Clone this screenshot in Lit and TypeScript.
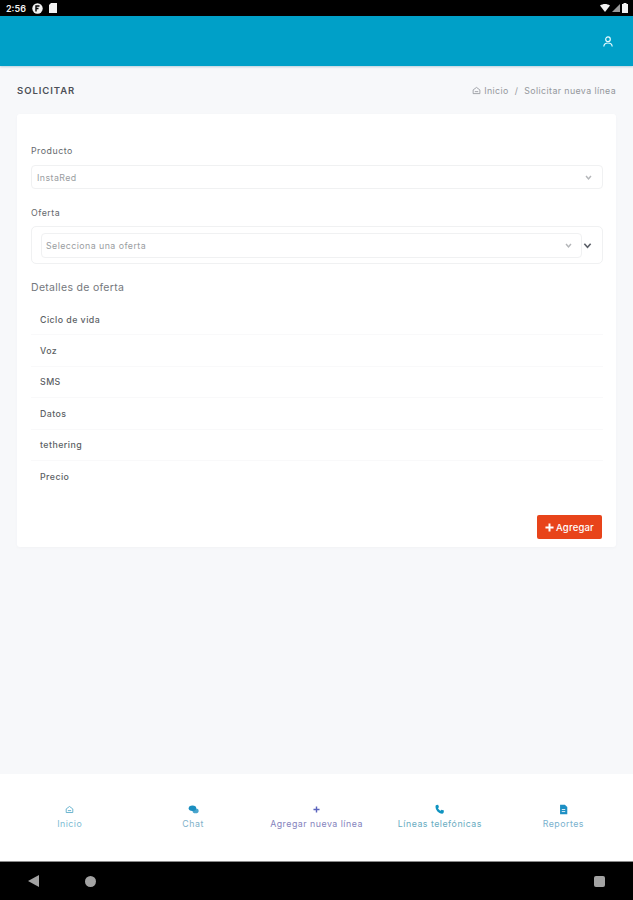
import { LitElement, html, css, svg } from 'lit';
import { customElement } from 'lit/decorators.js';

const homeIcon = svg`<path d="M2 7 8 2.500 14 7v6.500H2z" fill="none" stroke="currentColor" stroke-width="1.500"/><path d="M5 10h6" stroke="currentColor" stroke-width="1.500"/>`;
const chatIcon = svg`<ellipse cx="6.500" cy="6" rx="5.500" ry="4" fill="currentColor"/><ellipse cx="11" cy="10" rx="4.500" ry="3.400" fill="currentColor" opacity=".8"/>`;
const plusIcon = svg`<path d="M8 2.500v11M2.500 8h11" stroke="currentColor" stroke-width="2.600"/>`;
const phoneIcon = svg`<path d="M3.500 1.500 6 1l1.300 3.600-1.600 1.300c.7 1.800 2 3.100 3.800 3.900l1.400-1.600 3.600 1.400-.5 2.900c-.2.900-1 1.500-2 1.500C6.500 13.600 2.300 9 2.200 3.500c0-1 .4-1.700 1.300-2z" fill="currentColor"/>`;
const fileIcon = svg`<path d="M3 1h7l3.500 3.500V15H3z" fill="currentColor"/><path d="M5.500 8h5M5.500 11h5" stroke="#fff" stroke-width="1.200"/>`;

const navItems = [
  { label: 'Inicio', icon: homeIcon, box: '-2 -2 20 20', color: '#4fa6c6', text: '#7dbcd3' },
  { label: 'Chat', icon: chatIcon, box: '0 0 16 16', color: '#1b8fc0', text: '#7fb1c9' },
  { label: 'Agregar nueva línea', icon: plusIcon, box: '-2 -2 20 20', color: '#5a63bd', text: '#8583bd' },
  { label: 'Líneas telefónicas', icon: phoneIcon, box: '0 0 16 16', color: '#0f93c0', text: '#69acc1' },
  { label: 'Reportes', icon: fileIcon, box: '0 0 16 16', color: '#1d8fc4', text: '#7ab1ce' },
];

const offerRows = ['Ciclo de vida', 'Voz', 'SMS', 'Datos', 'tethering', 'Precio'];

@customElement('app-root')
export class AppRoot extends LitElement {
  static styles = css`
    :host {
      display: flex;
      flex-direction: column;
      height: 900px;
      background: #f7f8fa;
      font-family: Inter, "Liberation Sans", sans-serif;
      color: #4b4f56;
    }

    .status {
      height: 16px;
      background: #000;
      color: #f2f2f2;
      display: flex;
      align-items: center;
      padding: 0 5px 0 6px;
      font-size: 9px;
      font-weight: 600;
      gap: 6px;
    }
    .status .spacer { flex: 1; }
    .status svg { display: block; }
    .status-right { display: flex; align-items: center; gap: 2px; }

    .topbar {
      height: 50px;
      background: #00a0c8;
      box-shadow: 0 1px 2px rgba(0, 90, 130, 0.25);
      display: flex;
      align-items: center;
      justify-content: flex-end;
      padding: 0 20px;
      color: #e8fbff;
    }

    main {
      flex: 1;
      padding: 0 17px;
    }

    .crumbs-row {
      height: 48px;
      display: flex;
      align-items: center;
      justify-content: space-between;
    }
    .page-title {
      font-size: 9.5px;
      font-weight: 600;
      letter-spacing: 0.95px;
      color: #4d5057;
    }
    .crumbs {
      display: flex;
      align-items: center;
      gap: 3px;
      font-size: 8.8px;
      letter-spacing: 0.4px;
      color: #94979c;
    }
    .crumbs .sep { margin: 0 3px; }

    .card {
      background: #fff;
      border-radius: 3px;
      padding: 30px 13px 8px 14px;
      height: 433px;
      box-sizing: border-box;
      box-shadow: 0 1px 3px rgba(60, 70, 90, 0.03);
    }

    .label {
      font-size: 8.8px;
      line-height: 14px;
      letter-spacing: 0.5px;
      color: #65686d;
      margin-bottom: 7px;
    }
    .label.offer { margin-bottom: 6px; }

    .select {
      height: 24px;
      box-sizing: border-box;
      border: 1px solid #f0f1f2;
      border-radius: 4px;
      display: flex;
      align-items: center;
      justify-content: space-between;
      padding: 0 10px 0 5px;
      font-size: 8.8px;
      letter-spacing: 0.45px;
      color: #9a9da1;
      flex: 1;
    }
    .field { margin-bottom: 17px; }

    .select-group {
      height: 38px;
      box-sizing: border-box;
      border: 1px solid #f0f1f2;
      border-radius: 5px;
      display: flex;
      align-items: center;
      padding: 0 10px 0 9px;
      gap: 1px;
    }
    .select-group .select {
      height: 25px;
      padding: 0 9px 0 4px;
    }

    .details-title {
      font-size: 10.5px;
      line-height: 16px;
      letter-spacing: 0.3px;
      color: #74777c;
      margin: 16px 0 8px;
    }

    .row {
      height: 31.4px;
      box-sizing: border-box;
      display: flex;
      align-items: center;
      padding-left: 9px;
      font-size: 8.8px;
      font-weight: 500;
      letter-spacing: 0.45px;
      color: #5c5f65;
      border-bottom: 1px solid #f9f9fa;
    }
    .row.last { border-bottom: none; }

    .actions {
      display: flex;
      justify-content: flex-end;
      margin: 23px 1px 0 0;
    }
    .add {
      width: 65px;
      height: 24px;
      border: none;
      border-radius: 2px;
      background: #e8441a;
      color: #fff;
      font: inherit;
      font-size: 9.5px;
      font-weight: 500;
      letter-spacing: 0.2px;
      display: flex;
      align-items: center;
      justify-content: center;
      gap: 2px;
      padding: 0;
    }

    nav {
      height: 87px;
      background: #fff;
      display: grid;
      grid-template-columns: repeat(5, 1fr);
      padding: 0 8px;
    }
    .nav-item {
      display: flex;
      flex-direction: column;
      align-items: center;
      padding-top: 30px;
      font-size: 8.8px;
      line-height: 12px;
      letter-spacing: 0.5px;
      gap: 3px;
      white-space: nowrap;
    }
    .nav-item svg { display: block; }

    .android {
      height: 39px;
      box-sizing: border-box;
      background: #000;
      border-top: 1px solid #8a8a8a;
      display: grid;
      grid-template-columns: 28px 29px 1fr 11px;
      align-items: center;
      padding: 0 28px;
    }
    .back {
      width: 0;
      height: 0;
      border-top: 6px solid transparent;
      border-bottom: 6px solid transparent;
      border-right: 11px solid #a3a3a3;
    }
    .circle {
      width: 11px;
      height: 11px;
      border-radius: 50%;
      background: #a3a3a3;
      margin-left: 29px;
    }
    .square {
      width: 11px;
      height: 11px;
      border-radius: 2px;
      background: #a3a3a3;
    }
  `;

  private chevron(color: string, size = 8, width = 1.5) {
    return html`<svg width=${size} height=${size} viewBox="0 0 10 10">
      <path d="M1.5 3 5 7l3.5-4" fill="none" stroke=${color} stroke-width=${width * 10 / size}/>
    </svg>`;
  }

  render() {
    return html`
      <div class="status">
        <span>2:56</span>
        <svg width="11" height="11" viewBox="0 0 11 11">
          <circle cx="5.5" cy="5.5" r="5.2" fill="#f2f2f2"/>
          <path d="M4 8.5V3h3.5M4 5.500h2.500" stroke="#000" stroke-width="1.400" fill="none"/>
        </svg>
        <svg width="8" height="10" viewBox="0 0 8 10"><path d="M2 0h6v10H0V2z" fill="#f2f2f2"/></svg>
        <span class="spacer"></span>
        <span class="status-right">
          <svg width="10" height="8" viewBox="0 0 10 8"><path d="M0 1.500C3-.5 7-.5 10 1.500L5 8z" fill="#f2f2f2"/></svg>
          <svg width="8" height="8" viewBox="0 0 8 8"><path d="M8 0v8H0z" fill="#9a9a9a"/></svg>
          <svg width="6" height="10" viewBox="0 0 6 10"><path d="M1.500 0h3v1H6v9H0V1h1.500z" fill="#f2f2f2"/></svg>
        </span>
      </div>

      <header class="topbar">
        <svg width="10" height="11" viewBox="0 0 10 11" fill="none" stroke="currentColor" stroke-width="1.200">
          <circle cx="5" cy="3.200" r="2.300"/>
          <path d="M.8 10.500C1 8 2.700 7 5 7s4 1 4.200 3.500"/>
        </svg>
      </header>

      <main>
        <div class="crumbs-row">
          <span class="page-title">SOLICITAR</span>
          <span class="crumbs">
            <svg width="9" height="9" viewBox="0 0 16 16">${homeIcon}</svg>
            <span>Inicio</span><span class="sep">/</span><span>Solicitar nueva línea</span>
          </span>
        </div>

        <section class="card">
          <div class="field">
            <div class="label">Producto</div>
            <div class="select">InstaRed ${this.chevron('#b4b6b9', 7)}</div>
          </div>
          <div class="label offer">Oferta</div>
          <div class="select-group">
            <div class="select">Selecciona una oferta ${this.chevron('#b4b6b9', 7)}</div>
            ${this.chevron('#5c6068', 9, 1.6)}
          </div>
          <div class="details-title">Detalles de oferta</div>
          ${offerRows.map((r, i) => html`<div class="row ${i === offerRows.length - 1 ? 'last' : ''}">${r}</div>`)}
          <div class="actions">
            <button class="add">
              <svg width="9" height="9" viewBox="0 0 10 10"><path d="M5 .5v9M.5 5h9" stroke="#fff" stroke-width="2.200"/></svg>
              Agregar
            </button>
          </div>
        </section>
      </main>

      <nav>
        ${navItems.map((item) => html`
          <div class="nav-item" style="color:${item.text}">
            <svg width="11" height="11" viewBox=${item.box} style="color:${item.color}">${item.icon}</svg>
            <span>${item.label}</span>
          </div>
        `)}
      </nav>

      <div class="android">
        <span class="back"></span>
        <span class="circle"></span>
        <span></span>
        <span class="square"></span>
      </div>
    `;
  }
}
